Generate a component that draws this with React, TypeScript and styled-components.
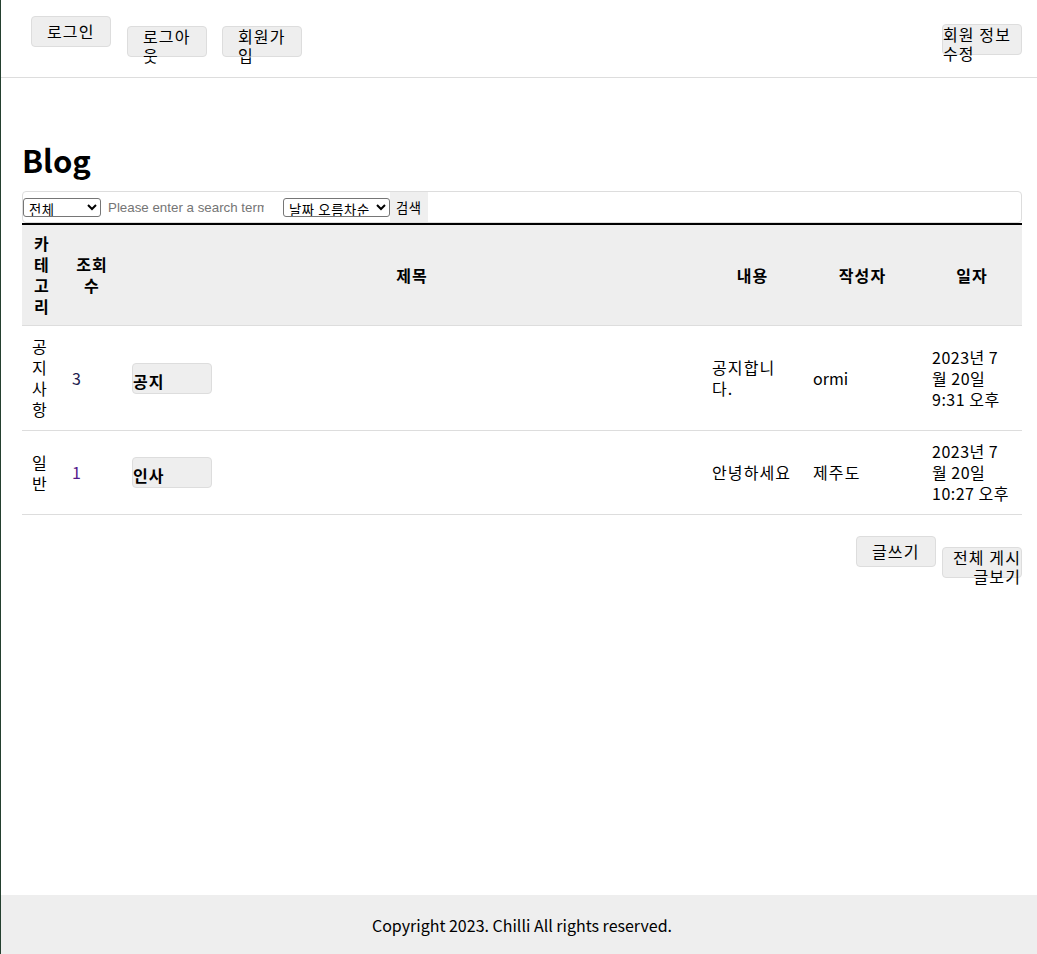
import React from "react";
import styled, { createGlobalStyle } from "styled-components";

const FONT = `"Noto Sans CJK KR", sans-serif`;

const Global = createGlobalStyle`
  html, body { margin: 0; padding: 0; }
  body {
    font-family: ${FONT};
    color: #000;
    background: #fff;
    border-left: 1px solid #24402f;
    letter-spacing: 1.1px;
  }
  * { box-sizing: border-box; }
`;

const Page = styled.div`
  min-height: 100vh;
  display: flex;
  flex-direction: column;
`;

const Header = styled.header`
  height: 78px;
  border-bottom: 1px solid #ddd;
  display: flex;
  justify-content: space-between;
  align-items: flex-start;
  padding: 16px 15px 0 30px;
`;

const NavGroup = styled.div`
  display: flex;
  align-items: flex-start;
`;

const Btn = styled.button<{
  $pad?: number;
  $padTop?: number;
  $align?: "left" | "center" | "right";
  $bold?: boolean;
  $top?: number;
  $left?: number;
}>`
  width: 80px;
  height: 31px;
  flex-shrink: 0;
  padding: ${(p) => p.$padTop ?? 0}px ${(p) => p.$pad ?? 0}px 0;
  margin-top: ${(p) => p.$top ?? 0}px;
  margin-left: ${(p) => p.$left ?? 0}px;
  border: 1px solid #ddd;
  border-radius: 4px;
  background: #eee;
  color: #000;
  font-family: ${FONT};
  font-size: 16px;
  line-height: 19px;
  letter-spacing: 1.1px;
  font-weight: ${(p) => (p.$bold ? 700 : 400)};
  text-align: ${(p) => p.$align ?? "left"};
  overflow: visible;
  cursor: pointer;
`;

const Main = styled.main`
  flex: 1;
  padding: 0 15px 0 21px;
`;

const Title = styled.h1`
  margin: 61px 0 10px;
  font-size: 31px;
  line-height: 42px;
  font-weight: 700;
  letter-spacing: 0;
`;

const SearchForm = styled.form`
  width: 1000px;
  height: 32px;
  border: 1px solid #ddd;
  border-radius: 4px;
  display: flex;
  align-items: center;
`;

const Select = styled.select<{ $w: number }>`
  width: ${(p) => p.$w}px;
  height: 19px;
  padding: 0 0 0 1px;
  border: 1px solid #767676;
  border-radius: 3px;
  background: #fff;
  color: #000;
  font-family: ${FONT};
  font-size: 13.33px;
  line-height: 17px;
  letter-spacing: 0.6px;
`;

const SearchInput = styled.input`
  width: 162px;
  height: 19px;
  margin: 0 16px 0 4px;
  padding: 0 3px;
  border: none;
  outline: none;
  font-family: "Liberation Sans", Arial, sans-serif;
  font-size: 13.33px;
  letter-spacing: 0;
  &::placeholder { color: #757575; }
`;

const SearchBtn = styled.button`
  align-self: stretch;
  padding: 0 6px;
  border: none;
  background: #efefef;
  font-family: ${FONT};
  font-size: 13.33px;
  letter-spacing: 0.6px;
  color: #000;
`;

const Table = styled.table`
  width: 1000px;
  table-layout: fixed;
  border-collapse: separate;
  border-spacing: 0;
  border-top: 2px solid #000;
`;

const Th = styled.th`
  background: #eee;
  padding: 8px 10px;
  border-bottom: 1px solid #ddd;
  font-size: 16px;
  line-height: 21px;
  font-weight: 700;
  text-align: center;
  vertical-align: middle;
`;

const Td = styled.td<{ $ls?: number; $pr?: number }>`
  padding: 10px ${(p) => p.$pr ?? 10}px 10px 10px;
  border-bottom: 1px solid #ddd;
  font-size: 16px;
  line-height: 21px;
  letter-spacing: ${(p) => p.$ls ?? 1.1}px;
  text-align: left;
  vertical-align: middle;
`;

const Count = styled.span<{ $color: string }>`
  color: ${(p) => p.$color};
  letter-spacing: 0;
`;

const Actions = styled.div`
  display: flex;
  justify-content: flex-end;
  align-items: flex-start;
  margin-top: 21px;
`;

const Footer = styled.footer`
  height: 59px;
  background: #eee;
  display: flex;
  align-items: center;
  justify-content: center;
  padding-left: 6px;
  font-size: 16px;
  letter-spacing: 0;
`;

const rows = [
  {
    cat: "공지사항",
    count: "3",
    countColor: "#23214f",
    title: "공지",
    content: "공지합니다.",
    author: "ormi",
    date: "2023년 7월 20일 9:31 오후",
  },
  {
    cat: "일반",
    count: "1",
    countColor: "#551a8b",
    title: "인사",
    content: "안녕하세요",
    author: "제주도",
    date: "2023년 7월 20일 10:27 오후",
  },
];

const hasHangul = (s: string) => /[가-힣]/.test(s);

export default function App() {
  return (
    <Page>
      <Global />
      <Header>
        <NavGroup>
          <Btn $pad={15}>로그인</Btn>
          <Btn $pad={15} $top={10} $left={16}>
            로그아웃
          </Btn>
          <Btn $pad={15} $top={10} $left={15}>
            회원가입
          </Btn>
        </NavGroup>
        <Btn $top={8}>회원 정보 수정</Btn>
      </Header>
      <Main>
        <Title>Blog</Title>
        <SearchForm onSubmit={(e) => e.preventDefault()}>
          <Select $w={78} defaultValue="all">
            <option value="all">전체</option>
            <option value="notice">공지사항</option>
            <option value="normal">일반</option>
          </Select>
          <SearchInput placeholder="Please enter a search term" />
          <Select $w={107} defaultValue="asc">
            <option value="asc">날짜 오름차순</option>
            <option value="desc">날짜 내림차순</option>
          </Select>
          <SearchBtn type="submit">검색</SearchBtn>
        </SearchForm>
        <Table>
          <colgroup>
            <col style={{ width: 40 }} />
            <col style={{ width: 60 }} />
            <col style={{ width: 580 }} />
            <col style={{ width: 101 }} />
            <col style={{ width: 119 }} />
            <col style={{ width: 100 }} />
          </colgroup>
          <thead>
            <tr>
              <Th>카테고리</Th>
              <Th>조회수</Th>
              <Th>제목</Th>
              <Th>내용</Th>
              <Th>작성자</Th>
              <Th>일자</Th>
            </tr>
          </thead>
          <tbody>
            {rows.map((r) => (
              <tr key={r.title}>
                <Td>{r.cat}</Td>
                <Td>
                  <Count $color={r.countColor}>{r.count}</Count>
                </Td>
                <Td>
                  <Btn $bold $padTop={6}>
                    {r.title}
                  </Btn>
                </Td>
                <Td>{r.content}</Td>
                <Td $ls={hasHangul(r.author) ? 1.1 : 0}>{r.author}</Td>
                <Td $ls={0.5} $pr={12}>
                  {r.date}
                </Td>
              </tr>
            ))}
          </tbody>
        </Table>
        <Actions>
          <Btn $pad={15}>글쓰기</Btn>
          <Btn $align="right" $top={11} $left={6}>
            전체 게시글보기
          </Btn>
        </Actions>
      </Main>
      <Footer>Copyright 2023. Chilli All rights reserved.</Footer>
    </Page>
  );
}
